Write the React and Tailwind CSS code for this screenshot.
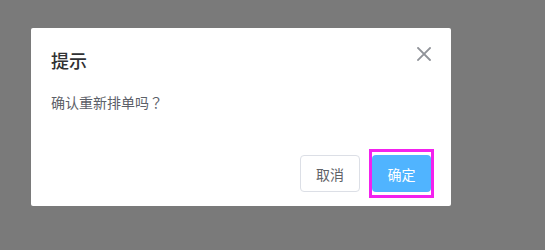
import React from 'react';

const CloseIcon = () => (
  <svg width="14" height="14" viewBox="0 0 14 14" className="block">
    <path d="M1 1L13 13M13 1L1 13" stroke="#909399" strokeWidth="1.8" strokeLinecap="square" />
  </svg>
);

const App = () => {
  return (
    <div
      className="min-h-[250px] bg-[#7a7a7a] pt-[28px] pl-[31px]"
      style={{ fontFamily: '"Noto Sans CJK SC", "Liberation Sans", sans-serif' }}
    >
      <div className="w-[420px] h-[178px] bg-white rounded-[2px] flex flex-col">
        {/* header */}
        <div className="flex items-start justify-between pl-5 pr-[20px] pt-5">
          <span className="text-[18px] leading-6 font-medium text-[#303133]">提示</span>
          <div className="mt-[-1px]">
            <CloseIcon />
          </div>
        </div>

        {/* body */}
        <div className="px-5 pt-5 text-sm leading-[21px] text-[#5c6068]">
          确认重新排单吗<span style={{ fontFamily: '"Noto Sans CJK TC", sans-serif' }}>？</span>
        </div>

        {/* footer */}
        <div className="mt-auto flex justify-end gap-3 px-5 pb-[14px]">
          <button className="h-[37px] w-[60px] rounded border border-[#dcdfe6] bg-white text-sm text-[#606266]">
            取消
          </button>
          <div className="relative">
            <button className="h-[37px] w-[59px] rounded bg-[#50b4ff] text-sm text-white">确定</button>
            <span className="pointer-events-none absolute -left-[3px] -top-[6px] -right-[3px] -bottom-[6px] border-[3px] border-[#f321ee]"></span>
          </div>
        </div>
      </div>
    </div>
  );
};

export default App;
